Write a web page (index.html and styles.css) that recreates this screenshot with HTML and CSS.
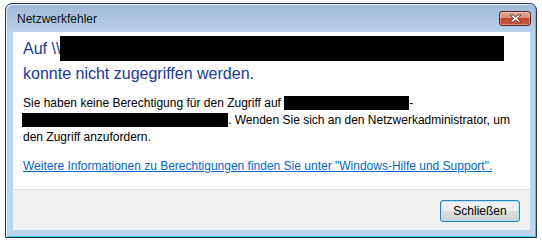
FILE: index.html
```html
<!DOCTYPE html>
<html lang="de">
<head>
  <meta charset="UTF-8" />
  <title>Netzwerkfehler</title>
  <link rel="stylesheet" href="styles.css">
</head>
<body>
  <div class="window">
    <div class="titlebar">
      <span class="title">Netzwerkfehler</span>
      <button class="close" title="Schließen">
        <svg width="15" height="9" viewBox="0 0 15 9">
          <path d="M2 1 L5 1 L7.5 3 L10 1 L13 1 L9.5 4.5 L13 8 L10 8 L7.5 6 L5 8 L2 8 L5.5 4.5 Z" fill="#fff" stroke="#4a2a2a" stroke-width="0.8" stroke-linejoin="round"/>
        </svg>
      </button>
    </div>
    <div class="client">
      <div class="content">
        <h1 class="instruction">Auf \\<span class="redact big"></span><br>konnte nicht zugegriffen werden.</h1>
        <p class="text">Sie haben keine Berechtigung für den Zugriff auf <span class="redact r1"></span>-<br><span class="redact r2"></span>. Wenden Sie sich an den Netzwerkadministrator, um<br>den Zugriff anzufordern.</p>
        <a class="help" href="#">Weitere Informationen zu Berechtigungen finden Sie unter "Windows-Hilfe und Support".</a>
      </div>
      <div class="footer">
        <button class="btn">Schließen</button>
      </div>
    </div>
  </div>
</body>
</html>
```

FILE: styles.css
```css
* {
  box-sizing: border-box;
  margin: 0;
  padding: 0;
}

body {
  background: #fff;
  font-family: "Liberation Sans", Arial, sans-serif;
  font-size: 12px;
  color: #000;
}

.window {
  margin: 3px 0 0 5px;
  width: 532px;
  height: 235px;
  border: 1px solid #2d3846;
  border-radius: 7px 7px 0 0;
  background: #bcd4ec;
  padding: 0 6px 7px 7px;
  display: flex;
  flex-direction: column;
  box-shadow: inset 1px 1px 0 rgba(255,255,255,0.7), inset -1px -1px 0 #3ec6e4;
  background-image: linear-gradient(#9fbad8 0, #b1c9e4 20px, #bcd4ec 30px);
}

.titlebar {
  height: 28px;
  display: flex;
  align-items: center;
  justify-content: space-between;
}

.title {
  padding-left: 4px;
  padding-top: 2px;
  color: #111;
}

.close {
  width: 32px;
  height: 15px;
  margin-right: -1px;
  border: 1px solid #5b2424;
  border-radius: 3px;
  background: linear-gradient(#e7a896 0, #d98a78 45%, #c8452e 50%, #c85a3c 100%);
  display: flex;
  align-items: center;
  justify-content: center;
  box-shadow: inset 0 0 0 1px rgba(255,255,255,0.35);
}

.client {
  flex: 1;
  display: flex;
  flex-direction: column;
  background: #fff;
}

.content {
  flex: 1;
  padding: 4px 10px 0 10px;
}

.instruction {
  font-weight: normal;
  font-size: 16px;
  line-height: 25px;
  color: #1a399e;
}

.redact {
  display: inline-block;
  background: #000;
  vertical-align: middle;
}

.redact.big {
  width: 444px;
  height: 25px;
  margin-left: -0.5px;
  vertical-align: top;
}

.redact.r1 {
  width: 125px;
  height: 14px;
  vertical-align: -3px;
}

.redact.r2 {
  width: 206px;
  height: 14px;
  margin-left: -1px;
  vertical-align: -3px;
}

.text {
  margin-top: 9px;
  line-height: 17px;
}

.help {
  display: block;
  margin-top: 12px;
  line-height: 17px;
  color: #0066cc;
}

.footer {
  height: 41px;
  border-top: 1px solid #dfdfdf;
  background: #f0f0f0;
  display: flex;
  align-items: center;
  justify-content: flex-end;
  padding-right: 10px;
}

.btn {
  width: 80px;
  height: 22px;
  font-family: "Liberation Sans", Arial, sans-serif;
  font-size: 12px;
  color: #000;
  border: 1px solid #3c7fb1;
  border-radius: 3px;
  background: linear-gradient(#f2f2f2 0, #ebebeb 50%, #dddddd 51%, #cfcfcf 100%);
  box-shadow: inset 0 0 0 1px #a7e1f7;
  margin-top: 1px;
}
```
